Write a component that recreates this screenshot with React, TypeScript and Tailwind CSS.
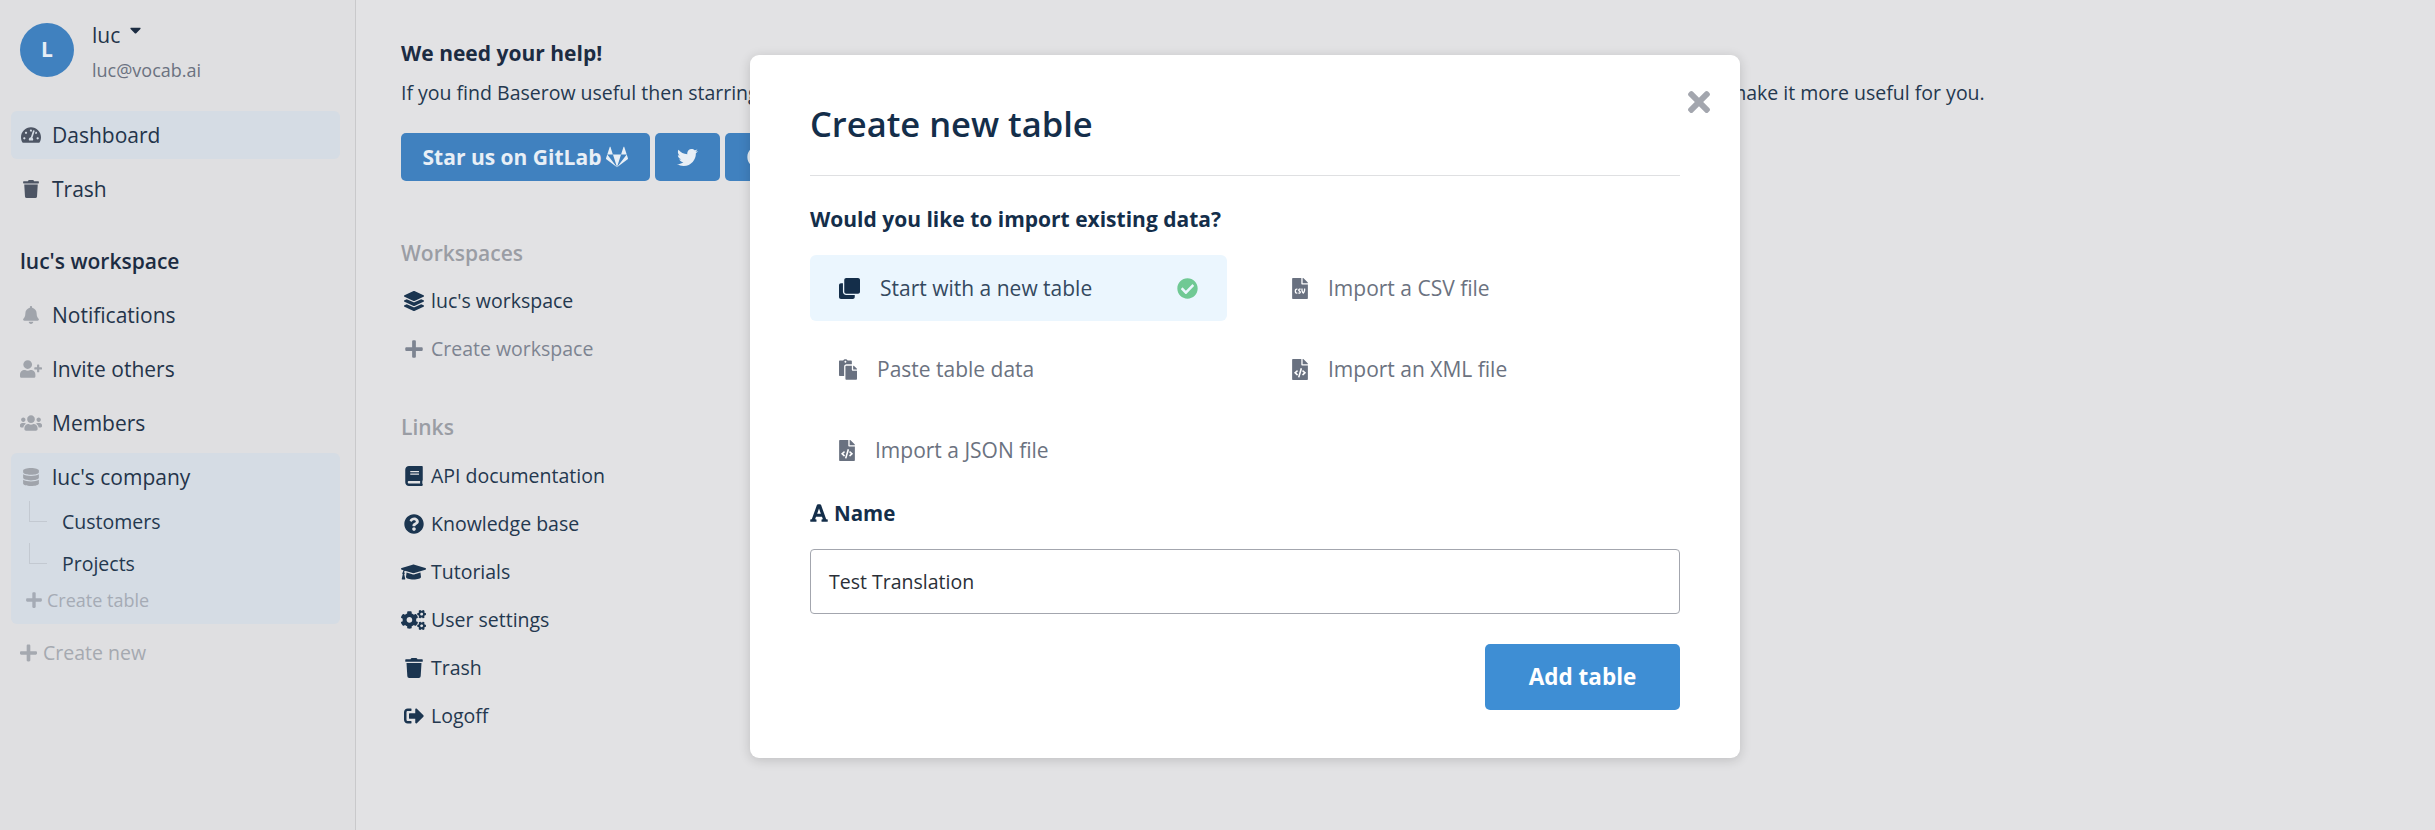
import React from "react";
import {
  FaTachometerAlt, FaTrash, FaBell, FaUserPlus, FaUsers, FaDatabase, FaCaretDown, FaGitlab, FaTwitter, FaReddit,
  FaLayerGroup, FaPlus, FaBook, FaQuestionCircle, FaGraduationCap, FaCogs, FaSignOutAlt, FaClone, FaCheckCircle,
  FaPaste, FaFileCsv, FaFileCode, FaFont, FaTimes,
} from "react-icons/fa";

const font = "font-['Open_Sans','Noto_Sans',sans-serif]";

function SideRow({ icon: Icon, label, iconClass, active = false }: { icon: any; label: string; iconClass: string; active?: boolean }) {
  return (
    <div className={`flex h-[48px] items-center ml-[11px] mr-[15px] rounded-[6px] pl-[9px] ${active ? "bg-[#d5dce4]" : ""}`}>
      <span className="flex w-[22px] justify-center">
        <Icon className={`h-[18px] ${iconClass}`} />
      </span>
      <span className="ml-[10px] pt-[2px] text-[21px] text-[#24344a]">{label}</span>
    </div>
  );
}

function LinkRow({ icon: Icon, label, iconClass, muted = false }: { icon: any; label: string; iconClass: string; muted?: boolean }) {
  return (
    <div className="flex h-[48px] items-center">
      <span className="flex w-[25px] justify-center">
        <Icon className={`h-[20px] ${iconClass} ${muted ? "text-[#7d8491]" : "text-[#1b3550]"}`} />
      </span>
      <span className={`ml-[5px] text-[19.5px] ${muted ? "text-[#7d8491]" : "text-[#24384f]"}`}>{label}</span>
    </div>
  );
}

function TableRow({ label }: { label: string }) {
  return (
    <div className="flex h-[42px] items-start pl-[18px]">
      <div className="h-[21px] w-[18px] border-b border-l border-[#c3c9d1]" />
      <span className="ml-[15px] text-[19.5px] leading-[42px] text-[#24384f]">{label}</span>
    </div>
  );
}

function Option({ icon: Icon, label, iconClass, active = false }: { icon: any; label: string; iconClass: string; active?: boolean }) {
  return (
    <div className={`flex h-[66px] items-center rounded-[6px] pl-[29px] ${active ? "bg-[#ebf6fe]" : ""}`}>
      <Icon className={`h-[21px] shrink-0 ${iconClass} ${active ? "text-[#142e4a]" : "text-[#697180]"}`} />
      <span className={`ml-[20px] pt-[1px] text-[21px] ${active ? "text-[#34495f]" : "text-[#6b7280]"}`}>{label}</span>
      {active && <FaCheckCircle className="ml-auto mr-[29px] h-[21px] w-[21px] text-[#70c994]" />}
    </div>
  );
}

export default function App() {
  return (
    <div className={`relative flex h-[830px] w-full overflow-hidden bg-[#e2e2e4] ${font}`}>
      <aside className="w-[356px] shrink-0 border-r border-[#c9c9cb] bg-[#dfdfe1]">
        <div className="flex h-[77px] pl-[20px] pt-[23px]">
          <div className="flex h-[54px] w-[54px] items-center justify-center rounded-full bg-[#4081bf] text-[21px] font-bold text-[#e6eef6]">L</div>
          <div className="ml-[18px] h-[54px]">
            <div className="flex h-[24px] items-center text-[21px] leading-[24px] text-[#24344a]">
              luc
              <FaCaretDown className="ml-[10px] -mt-[10px] h-[18px] w-[11px] text-[#1c2c42]" />
            </div>
            <div className="mt-[11px] text-[18px] leading-[24px] text-[#6b7280]">luc@vocab.ai</div>
          </div>
        </div>
        <div className="mt-[34px] flex flex-col gap-[6px]">
          <SideRow icon={FaTachometerAlt} label="Dashboard" iconClass="w-[20px] text-[#4d5564]" active />
          <SideRow icon={FaTrash} label="Trash" iconClass="w-[16px] text-[#4d5564]" />
        </div>
        <div className="ml-[20px] mt-[34px] text-[21px] font-semibold leading-[28px] text-[#1c2c42]">luc's workspace</div>
        <div className="mt-[16px] flex flex-col gap-[6px]">
          <SideRow icon={FaBell} label="Notifications" iconClass="w-[16px] text-[#a0a4ab]" />
          <SideRow icon={FaUserPlus} label="Invite others" iconClass="w-[22px] text-[#a0a4ab]" />
          <SideRow icon={FaUsers} label="Members" iconClass="w-[22px] text-[#a0a4ab]" />
        </div>
        <div className="ml-[11px] mr-[15px] mt-[6px] h-[171px] rounded-[6px] bg-[#d5dce4]">
          <div className="flex h-[48px] items-center pl-[9px]">
            <span className="flex w-[22px] justify-center">
              <FaDatabase className="h-[18px] w-[16px] text-[#a0a4ab]" />
            </span>
            <span className="ml-[10px] pt-[2px] text-[21px] text-[#24344a]">luc's company</span>
          </div>
          <TableRow label="Customers" />
          <TableRow label="Projects" />
          <div className="flex h-[30px] items-center pl-[15px] text-[#a5abb5]">
            <FaPlus className="h-[18px] w-[16px]" />
            <span className="ml-[5px] text-[18px]">Create table</span>
          </div>
        </div>
        <div className="mt-[14px] flex h-[30px] items-center pl-[20px] text-[#a5a9b0]">
          <FaPlus className="h-[20px] w-[17px]" />
          <span className="ml-[6px] text-[19.5px]">Create new</span>
        </div>
      </aside>

      <main className="min-w-0 flex-1 pl-[45px] pt-[39px]">
        <div className="text-[21px] font-bold leading-[28px] text-[#1c2c42]">We need your help!</div>
        <p className="mt-[12px] whitespace-nowrap text-[19.5px] leading-[28px] text-[#24384f]">
          If you find Baserow useful then starring our repository on GitLab and following us on social media would help us a lot to grow this community and make it more useful for you.
        </p>
        <div className="mt-[26px] flex h-[48px] gap-[5px] text-[#e8eff6]">
          <div className="flex w-[249px] items-center justify-center rounded-[5px] bg-[#4081bf] text-[21px] font-bold">
            <span className="pt-[2px]">Star us on GitLab</span>
            <FaGitlab className="ml-[5px] h-[22px] w-[22px]" />
          </div>
          <div className="flex w-[65px] items-center justify-center rounded-[5px] bg-[#4081bf]">
            <FaTwitter className="h-[21px] w-[21px]" />
          </div>
          <div className="flex w-[65px] items-center justify-center rounded-[5px] bg-[#4081bf]">
            <FaReddit className="h-[22px] w-[22px]" />
          </div>
        </div>
        <div className="mt-[58px] text-[21px] font-semibold leading-[28px] text-[#9a9da4]">Workspaces</div>
        <div className="mt-[10px]">
          <LinkRow icon={FaLayerGroup} label="luc's workspace" iconClass="w-[20px]" />
          <LinkRow icon={FaPlus} label="Create workspace" iconClass="w-[18px]" muted />
        </div>
        <div className="mt-[40px] text-[21px] font-semibold leading-[28px] text-[#9a9da4]">Links</div>
        <div className="mt-[11px]">
          <LinkRow icon={FaBook} label="API documentation" iconClass="w-[18px]" />
          <LinkRow icon={FaQuestionCircle} label="Knowledge base" iconClass="w-[20px]" />
          <LinkRow icon={FaGraduationCap} label="Tutorials" iconClass="w-[25px]" />
          <LinkRow icon={FaCogs} label="User settings" iconClass="w-[25px]" />
          <LinkRow icon={FaTrash} label="Trash" iconClass="w-[18px]" />
          <LinkRow icon={FaSignOutAlt} label="Logoff" iconClass="w-[20px]" />
        </div>
      </main>

      <div className="absolute left-[750px] top-[55px] h-[703px] w-[990px] rounded-[9px] bg-white px-[60px] pt-[42px] shadow-[0_2px_12px_rgba(0,0,0,0.16)]">
        <button className="absolute right-[30px] top-[31px] text-[#a3a6ae]">
          <FaTimes className="h-[32px] w-[22px]" />
        </button>
        <h1 className="text-[34.5px] font-semibold leading-[54px] text-[#142e4a]">Create new table</h1>
        <div className="mt-[24px] h-[1px] bg-[#dfe0e2]" />
        <div className="mt-[29px] text-[21px] font-bold leading-[28px] text-[#142e4a]">Would you like to import existing data?</div>
        <div className="mt-[22px] grid grid-cols-2 gap-x-[36px] gap-y-[15px]">
          <Option icon={FaClone} label="Start with a new table" iconClass="w-[21px]" active />
          <Option icon={FaFileCsv} label="Import a CSV file" iconClass="w-[16px]" />
          <Option icon={FaPaste} label="Paste table data" iconClass="w-[18px]" />
          <Option icon={FaFileCode} label="Import an XML file" iconClass="w-[16px]" />
          <Option icon={FaFileCode} label="Import a JSON file" iconClass="w-[16px]" />
        </div>
        <div className="mt-[16px] flex items-center text-[20.5px] font-bold leading-[28px] text-[#142e4a]">
          <FaFont className="mr-[6px] h-[20px] w-[18px]" />
          Name
        </div>
        <div className="mt-[22px] flex h-[65px] items-center rounded-[4px] border border-[#a3a6ae] pl-[18px] text-[19.5px] text-[#2a2f38]">Test Translation</div>
        <div className="mt-[30px] flex justify-end">
          <div className="flex h-[66px] w-[195px] items-center justify-center rounded-[5px] bg-[#3e8ed4] text-[22.5px] font-bold text-white">Add table</div>
        </div>
      </div>
    </div>
  );
}
